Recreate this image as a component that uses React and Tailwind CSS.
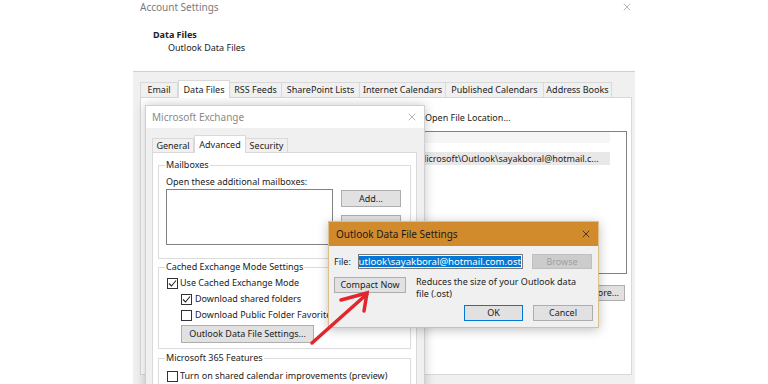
import { X } from "lucide-react";

function Check({ checked }) {
  return (
    <span className="w-[11px] h-[11px] border border-[#333] bg-white flex items-center justify-center shrink-0">
      {checked && (
        <svg width="9" height="9" viewBox="0 0 9 9">
          <path d="M1 4.5 L3.5 7 L8 1.5" fill="none" stroke="#222" strokeWidth="1.1" />
        </svg>
      )}
    </span>
  );
}

function Btn({ children, className = "" }) {
  return (
    <div className={`bg-[#e1e1e1] border border-[#adadad] flex items-center justify-center text-[#222] ${className}`}>
      {children}
    </div>
  );
}

const mainTabs = [
  ["Email", "w-[38px]"],
  ["Data Files", "w-[52px]"],
  ["RSS Feeds", "w-[52px]"],
  ["SharePoint Lists", "w-[78px]"],
  ["Internet Calendars", "w-[86px]"],
  ["Published Calendars", "w-[98px]"],
  ["Address Books", "w-[68px]"],
];

export default function App() {
  return (
    <div className="relative w-[768px] h-[384px] bg-white overflow-hidden text-[9px] text-[#222] font-['Noto_Sans',sans-serif] leading-[12px]">
      {/* Account Settings window */}
      <div className="absolute left-[133px] top-0 w-[502px] h-[384px] flex flex-col">
        <div className="h-[71px] bg-white">
          <div className="flex items-center justify-between pl-[7px] pr-[2px] h-[14px]">
            <span className="text-[#7a7a7a] text-[10px]">Account Settings</span>
            <X className="w-[12px] h-[12px] text-[#888]" strokeWidth={1.2} />
          </div>
          <div className="mt-[14px] pl-[20px] font-bold leading-[13px]">Data Files</div>
          <div className="pl-[35px] leading-[13px]">Outlook Data Files</div>
        </div>
        <div className="flex-1 bg-[#f0f0f0] border-t border-[#cfcfcf] pt-[8px] pl-[7px] pr-[2px]">
          <div className="flex items-end h-[17px]">
            {mainTabs.map(([t, w]) =>
              t === "Data Files" ? (
                <div key={t} className={`${w} h-[18px] -mb-px bg-white border border-b-0 border-[#d9d9d9] flex items-center justify-center relative z-10`}>
                  {t}
                </div>
              ) : (
                <div key={t} className={`${w} h-[15px] border border-b-0 border-l-0 first:border-l border-[#d9d9d9] flex items-center justify-center`}>
                  {t}
                </div>
              )
            )}
          </div>
          <div className="w-[492px] h-[278px] bg-white border border-[#d9d9d9]">
            <div className="pt-[13px] pl-[284px] leading-[14px]">Open File Location...</div>
            <div className="ml-[6px] mt-[6px] w-[480px] h-[143px] border border-[#828282]">
              <div className="w-[462px] h-[11px] bg-[#f6f6f6]" />
              <div className="mt-[9px] w-[462px] h-[13px] bg-[#e8e8e8] pl-[270px] flex items-center whitespace-nowrap overflow-hidden">
                Microsoft\Outlook\sayakboral@hotmail.c...
              </div>
            </div>
            <div className="flex justify-end pr-[6px] mt-[11px]">
              <Btn className="w-[40px] h-[16px] !justify-end pr-[5px]">More...</Btn>
            </div>
          </div>
        </div>
      </div>

      {/* Microsoft Exchange dialog */}
      <div className="absolute left-[145px] top-[105px] w-[280px] h-[290px] border border-[#cfcfcf] bg-[#f0f0f0] shadow-[0_0_10px_rgba(0,0,0,0.22)] overflow-hidden">
        <div className="h-[22px] bg-white flex items-center justify-between pl-[6px] pr-[6px]">
          <span className="text-[#8a8a8a] text-[10px]">Microsoft Exchange</span>
          <X className="w-[12px] h-[12px] text-[#888]" strokeWidth={1.2} />
        </div>
        <div className="pt-[7px] pl-[6px]">
          <div className="flex items-end h-[17px]">
            <div className="w-[42px] h-[14px] border border-b-0 border-[#d9d9d9] flex items-center justify-center">General</div>
            <div className="w-[52px] h-[18px] -mb-px bg-white border border-b-0 border-[#d9d9d9] flex items-center justify-center relative z-10">Advanced</div>
            <div className="w-[42px] h-[14px] border border-b-0 border-l-0 border-[#d9d9d9] flex items-center justify-center">Security</div>
          </div>
          <div className="w-[265px] h-[260px] bg-white border border-[#d9d9d9] px-[5px]">
            <fieldset className="mt-[6px] border border-[#dcdcdc] pb-[13px]">
              <legend className="ml-[6px] px-[1px]">Mailboxes</legend>
              <div className="mt-[5px] pl-[7px]">Open these additional mailboxes:</div>
              <div className="flex gap-[8px] pl-[7px] mt-[1px]">
                <div className="w-[167px] h-[56px] border border-[#828282] bg-white" />
                <div className="flex flex-col gap-[8px] pt-px">
                  <Btn className="w-[60px] h-[17px]">Add...</Btn>
                  <Btn className="w-[60px] h-[17px]" />
                </div>
              </div>
            </fieldset>
            <fieldset className="mt-[2px] border border-[#dcdcdc] pb-[5px]">
              <legend className="ml-[6px] px-[1px]">Cached Exchange Mode Settings</legend>
              <div className="mt-[4px] pl-[8px] flex flex-col gap-[4px]">
                <div className="flex items-center gap-[2px] h-[12px]"><Check checked />Use Cached Exchange Mode</div>
                <div className="flex items-center gap-[3px] h-[12px] pl-[14px]"><Check checked />Download shared folders</div>
                <div className="flex items-center gap-[3px] h-[12px] pl-[14px] whitespace-nowrap">
                  <Check />Download Public Folder Favorites
                </div>
                <div className="pl-[14px]">
                  <Btn className="w-[133px] h-[18px]">Outlook Data File Settings...</Btn>
                </div>
              </div>
            </fieldset>
            <fieldset className="mt-[3px] border border-[#dcdcdc] pb-[8px]">
              <legend className="ml-[6px] px-[1px]">Microsoft 365 Features</legend>
              <div className="mt-[6px] pl-[8px] flex items-center gap-[2px] h-[12px]">
                <Check />Turn on shared calendar improvements (preview)
              </div>
            </fieldset>
          </div>
        </div>
      </div>

      {/* Outlook Data File Settings dialog */}
      <div className="absolute left-[328px] top-[221px] w-[271px] h-[107px] border border-[#dcbf8c] bg-[#f0f0f0] shadow-[0_2px_10px_rgba(0,0,0,0.25)] z-20">
        <div className="h-[24px] bg-[#d18b2d] flex items-center justify-between pl-[7px] pr-[6px]">
          <span className="text-[10px] text-[#1a1a1a]">Outlook Data File Settings</span>
          <X className="w-[12px] h-[12px] text-[#222]" strokeWidth={1.6} />
        </div>
        <div className="px-[5px] pt-[8px]">
          <div className="flex items-center h-[15px]">
            <span className="w-[24px]">File:</span>
            <div className="w-[165px] h-[15px] border border-[#7a7a7a] bg-white flex items-center justify-end overflow-hidden pr-[1px]">
              <span className="bg-[#0078d7] text-white whitespace-nowrap text-[9.6px] leading-[11px] shrink-0">Outlook\sayakboral@hotmail.com.ost</span>
            </div>
            <div className="w-[60px] h-[15px] ml-[9px] bg-[#cccccc] border border-[#bfbfbf] text-[#a0a0a0] flex items-center justify-center">Browse</div>
          </div>
          <div className="flex mt-[8px]">
            <Btn className="w-[72px] h-[16px]">Compact Now</Btn>
            <div className="ml-[10px] w-[170px] leading-[12px] -mt-[1px]">Reduces the size of your Outlook data file (.ost)</div>
          </div>
          <div className="flex justify-end gap-[10px] mt-[5px]">
            <Btn className="w-[59px] h-[16px] !border-[#0078d7]">OK</Btn>
            <Btn className="w-[60px] h-[16px]">Cancel</Btn>
          </div>
        </div>
      </div>

      {/* red arrow */}
      <svg className="absolute left-0 top-0 z-30" width="768" height="384" viewBox="0 0 768 384">
        <g stroke="#e3262b" strokeWidth="3.5" strokeLinecap="round" fill="none">
          <path d="M312 343 L367 294" />
          <path d="M341 300 L367 293 L364 311" />
        </g>
      </svg>
    </div>
  );
}
